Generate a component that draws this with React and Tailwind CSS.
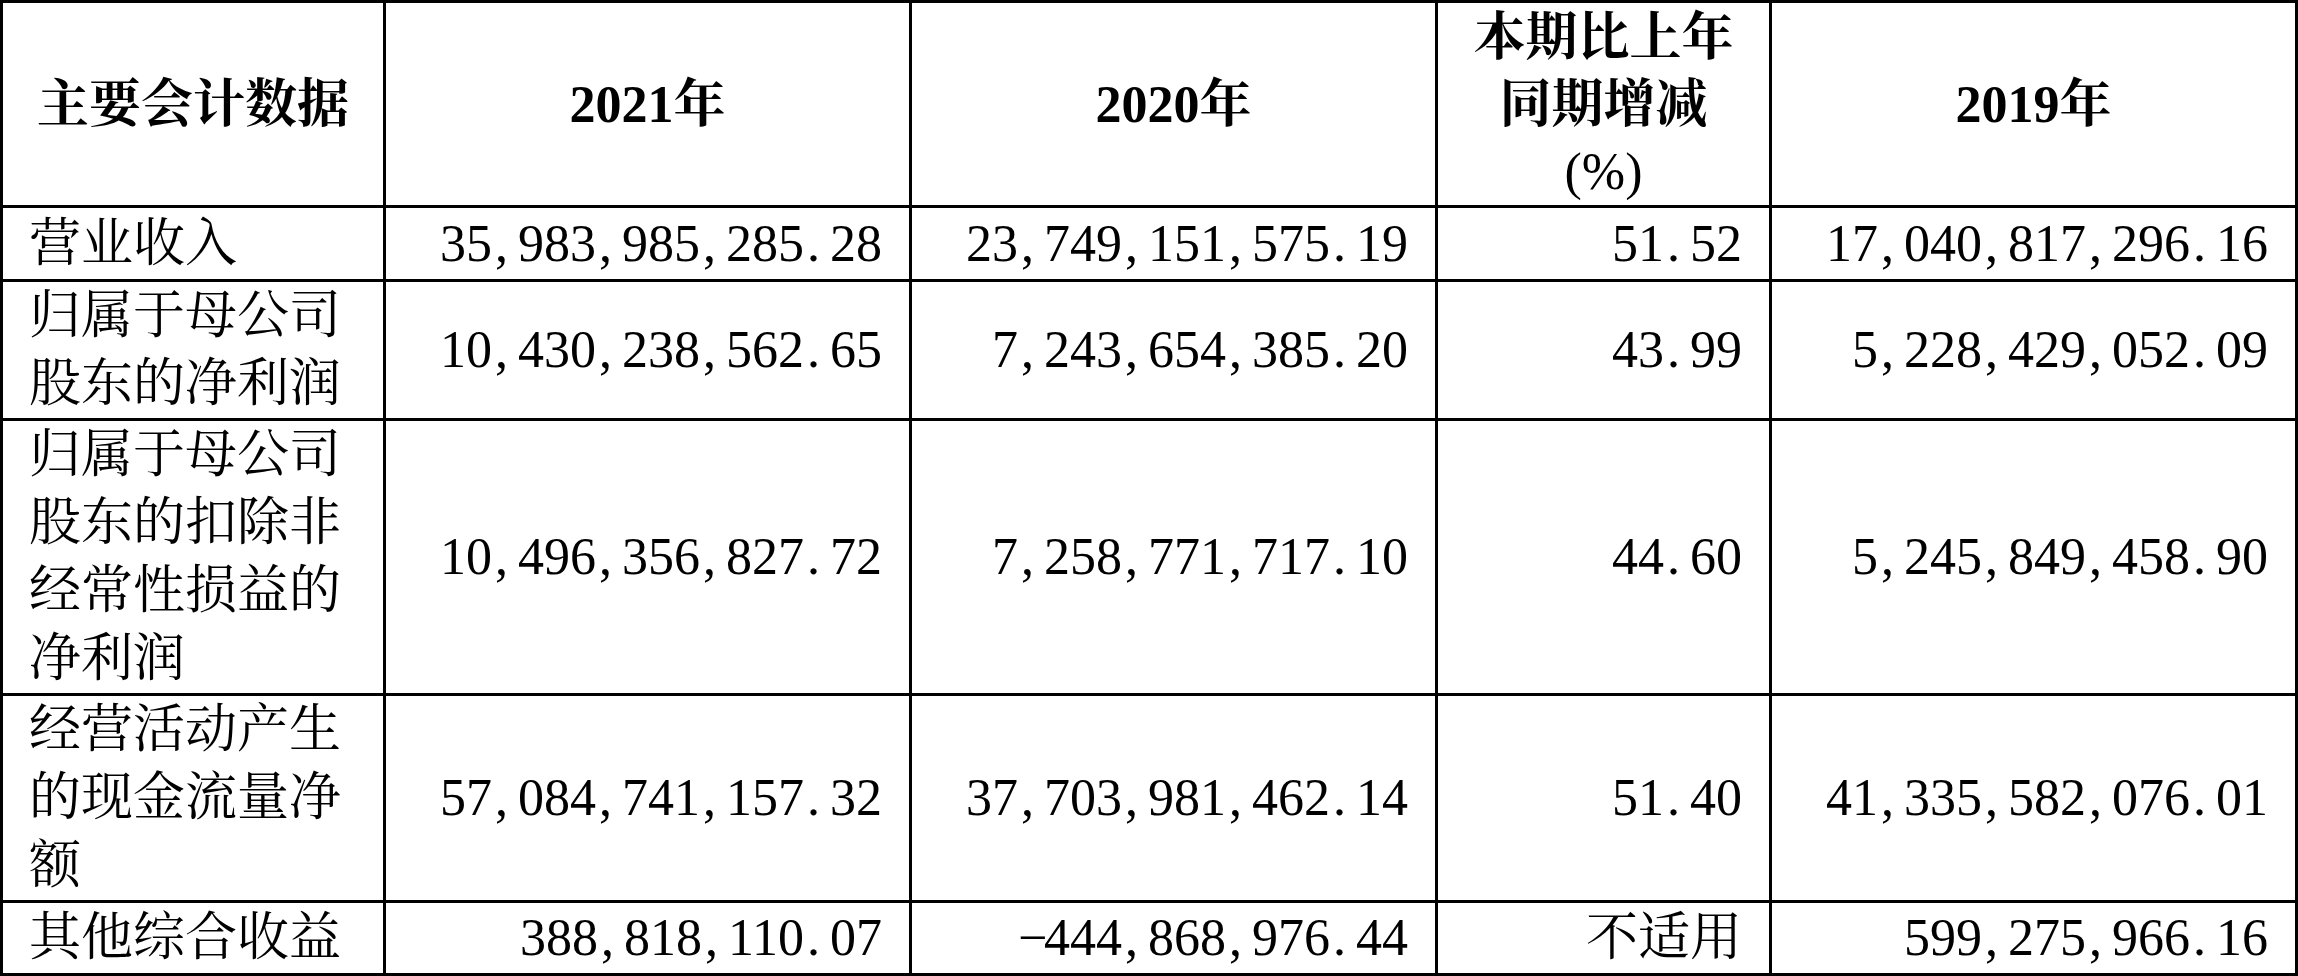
import React from "react";

const rows = [
  ["营业收入", "35,983,985,285.28", "23,749,151,575.19", "51.52", "17,040,817,296.16"],
  ["归属于母公司股东的净利润", "10,430,238,562.65", "7,243,654,385.20", "43.99", "5,228,429,052.09"],
  ["归属于母公司股东的扣除非经常性损益的净利润", "10,496,356,827.72", "7,258,771,717.10", "44.60", "5,245,849,458.90"],
  ["经营活动产生的现金流量净额", "57,084,741,157.32", "37,703,981,462.14", "51.40", "41,335,582,076.01"],
  ["其他综合收益", "388,818,110.07", "-444,868,976.44", "不适用", "599,275,966.16"],
];

function Num({ v }) {
  const out = [];
  let buf = "";
  v.split("").forEach((c, i) => {
    if (c === "," || c === ".") {
      if (buf) { out.push(buf); buf = ""; }
      out.push(
        <span key={i} className="inline-block w-[26px] text-left pl-[3px]">{c}</span>
      );
    } else if (c === "-") {
      if (buf) { out.push(buf); buf = ""; }
      out.push(
        <span key={i} className="inline-block w-[26px] text-center">−</span>
      );
    } else {
      buf += c;
    }
  });
  if (buf) out.push(buf);
  return <span className="whitespace-nowrap">{out}</span>;
}

export default function App() {
  const head = "bg-white flex items-center justify-center text-center font-bold leading-[67px]";
  const label = "bg-white flex items-center pl-[26px] pr-[10px] leading-[68px]";
  const num = "bg-white flex items-center justify-end pr-[27px] leading-[68px]";
  return (
    <div className="w-[2298px] h-[976px] bg-white">
      <div className="w-[2298px] h-[976px] bg-black p-[3px] grid grid-cols-[380px_523px_523px_331px_523px] grid-rows-[202px_71px_136px_272px_204px_70px] gap-[3px] text-[52px] text-black font-['Liberation_Serif','Noto_Serif_CJK_SC','Noto_Sans_CJK_SC',serif]">
        <div className={head}>主要会计数据</div>
        <div className={head}>2021年</div>
        <div className={head}>2020年</div>
        <div className={head}>
          <div>
            本期比上年
            <br />
            同期增减
            <br />
            <span className="font-normal">(%)</span>
          </div>
        </div>
        <div className={head}>2019年</div>
        {rows.map((r) => (
          <React.Fragment key={r[0]}>
            <div className={label}>
              <div>{r[0]}</div>
            </div>
            <div className={num}><Num v={r[1]} /></div>
            <div className={num}><Num v={r[2]} /></div>
            <div className={num}>{/^[0-9.]+$/.test(r[3]) ? <Num v={r[3]} /> : r[3]}</div>
            <div className={num}><Num v={r[4]} /></div>
          </React.Fragment>
        ))}
      </div>
    </div>
  );
}
